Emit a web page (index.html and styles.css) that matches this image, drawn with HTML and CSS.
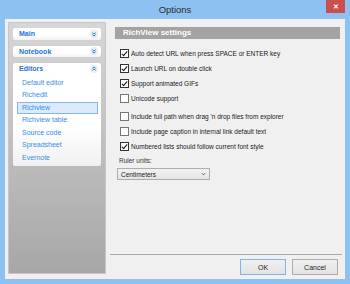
FILE: index.html
```html
<!DOCTYPE html>
<html lang="en">
  <head>
    <meta charset="UTF-8" />
    <title>Options</title>
    <link rel="stylesheet" href="styles.css">
  </head>
  <body>
    <div class="window">
      <!-- Title bar -->
      <div class="titlebar">
        <span></span>
        <span class="title">Options</span>
        <span class="close-btn">&#x2715;</span>
      </div>

      <div class="client">
        <!-- Left navigation -->
        <div class="sidebar">
          <div class="nav-box">
            <div class="nav-head">Main
              <svg class="chev" viewBox="0 0 8 8"><circle cx="4" cy="4" r="3.6"/><path d="M2.3 2.6 4 4 5.7 2.6M2.3 4.6 4 6 5.7 4.6"/></svg>
            </div>
          </div>
          <div class="nav-box">
            <div class="nav-head">Notebook
              <svg class="chev" viewBox="0 0 8 8"><circle cx="4" cy="4" r="3.6"/><path d="M2.3 2.6 4 4 5.7 2.6M2.3 4.6 4 6 5.7 4.6"/></svg>
            </div>
          </div>
          <div class="nav-box editors">
            <div class="nav-head">Editors
              <svg class="chev" viewBox="0 0 8 8"><circle cx="4" cy="4" r="3.6"/><path d="M2.3 5.4 4 4 5.7 5.4M2.3 3.4 4 2 5.7 3.4"/></svg>
            </div>
            <div class="nav-items">
              <div class="nav-item">Default editor</div>
              <div class="nav-item">Richedit</div>
              <div class="nav-item selected">Richview</div>
              <div class="nav-item">Richview table</div>
              <div class="nav-item">Source code</div>
              <div class="nav-item">Spreadsheet</div>
              <div class="nav-item">Evernote</div>
            </div>
          </div>
        </div>

        <!-- Settings page -->
        <div class="page">
          <div class="page-head">RichView settings</div>

          <div class="options">
            <div class="opt"><span class="box checked"></span>Auto detect URL when press SPACE or ENTER key</div>
            <div class="opt"><span class="box checked"></span>Launch URL on double click</div>
            <div class="opt"><span class="box checked"></span>Support animated GIFs</div>
            <div class="opt"><span class="box"></span>Unicode support</div>
            <div class="opt group"><span class="box"></span>Include full path when drag 'n drop files from explorer</div>
            <div class="opt"><span class="box"></span>Include page caption in internal link default text</div>
            <div class="opt"><span class="box checked"></span>Numbered lists should follow current font style</div>

            <div class="ruler-label">Ruler units:</div>
            <div class="select">Centimeters
              <svg class="select-arrow" viewBox="0 0 6 4"><path d="M1 1 3 3 5 1"/></svg>
            </div>
          </div>

          <div class="footer">
            <button class="btn default">OK</button>
            <button class="btn">Cancel</button>
          </div>
        </div>
      </div>
    </div>
  </body>
</html>
```

FILE: styles.css
```css
/* General */
body {
  margin: 0;
  font-family: "Liberation Sans", Arial, sans-serif;
  font-size: 6.5px;
  color: #1a1a1a;
}

.window {
  width: 350px;
  height: 284px;
  box-sizing: border-box;
  padding: 0 5px 5px;
  background: #8cc1f1;
  display: flex;
  flex-direction: column;
}

/* Title bar */
.titlebar {
  height: 19px;
  display: grid;
  grid-template-columns: 1fr auto 1fr;
}

.title {
  font-size: 9.5px;
  color: #2c2c2c;
  line-height: 20px;
}

.close-btn {
  justify-self: end;
  width: 19px;
  height: 13px;
  background: #c94f4f;
  color: #fff;
  font-size: 7px;
  font-weight: bold;
  line-height: 13px;
  text-align: center;
}

.client {
  flex: 1;
  background: #f0f0f0;
  display: flex;
}

/* Sidebar */
.sidebar {
  width: 98px;
  box-sizing: border-box;
  margin: 3px 0 5px 3px;
  padding: 5px 4px 0;
  border: 1px solid #c6c6c6;
  background: linear-gradient(#d6d6d6, #a7a7a7);
  display: flex;
  flex-direction: column;
  gap: 6px;
}

.nav-box {
  background: linear-gradient(#ffffff 60%, #f1f1f1);
  border-radius: 2px;
}

.nav-head {
  height: 11.5px;
  display: flex;
  align-items: center;
  justify-content: space-between;
  padding: 0 3px 0 6px;
  font-size: 7px;
  font-weight: bold;
  color: #2474d6;
}

.chev {
  width: 8px;
  height: 8px;
}

.chev circle {
  fill: #edf2fa;
  stroke: #d5dde8;
  stroke-width: 0.5;
}

.chev path {
  fill: none;
  stroke: #2a78d8;
  stroke-width: 1;
}

.nav-items {
  padding: 2px 0 1.5px;
}

.nav-item {
  height: 12.5px;
  line-height: 10.5px;
  margin: 0 3px 0 4px;
  padding-left: 4px;
  border: 1px solid transparent;
  box-sizing: border-box;
  font-size: 7px;
  color: #3a8be8;
}

.nav-item.selected {
  background: #dcebfc;
  border-color: #86b4e8;
}

/* Settings page */
.page {
  flex: 1;
  margin-left: 4px;
  margin-right: 3px;
  display: flex;
  flex-direction: column;
}

.page-head {
  margin: 8px 2px 0 5px;
  height: 12px;
  line-height: 12px;
  padding-left: 8px;
  background: #a3a3a3;
  color: #fff;
  font-size: 8px;
  font-weight: bold;
}

.options {
  padding: 7px 0 0 10px;
}

.opt {
  height: 15px;
  display: flex;
  align-items: center;
  gap: 2px;
}

.opt.group {
  margin-top: 3px;
}

.box {
  width: 9px;
  height: 9px;
  box-sizing: border-box;
  border: 1px solid #777;
  background: #fff;
  position: relative;
}

.box.checked {
  border-color: #333;
}

.box.checked::after {
  content: "";
  position: absolute;
  left: 2px;
  top: 0px;
  width: 2px;
  height: 5px;
  border: solid #111;
  border-width: 0 1.5px 1.5px 0;
  transform: rotate(40deg);
}

.ruler-label {
  margin: 2px 0 0 -1px;
  height: 10px;
  line-height: 10px;
  color: #333;
}

.select {
  margin: 2px 0 0 -3px;
  width: 93px;
  height: 12px;
  box-sizing: border-box;
  border: 1px solid #adadad;
  background: linear-gradient(#f2f2f2, #e4e4e4);
  padding: 0 3px;
  display: flex;
  align-items: center;
  justify-content: space-between;
}

.select-arrow {
  width: 5px;
  height: 4px;
}

.select-arrow path {
  fill: none;
  stroke: #444;
  stroke-width: 1;
}

/* Footer buttons */
.footer {
  margin-top: auto;
  border-top: 1px solid #a9a9a9;
  padding: 4px 4px 4px 0;
  display: flex;
  justify-content: flex-end;
  gap: 6px;
}

.btn {
  width: 46px;
  height: 16px;
  padding: 0;
  font-family: "Liberation Sans", Arial, sans-serif;
  font-size: 7px;
  color: #1e1e1e;
  border: 1px solid #acacac;
  background: linear-gradient(#f0f0f0, #e3e3e3);
}

.btn.default {
  border-color: #7eb4ea;
}
```
